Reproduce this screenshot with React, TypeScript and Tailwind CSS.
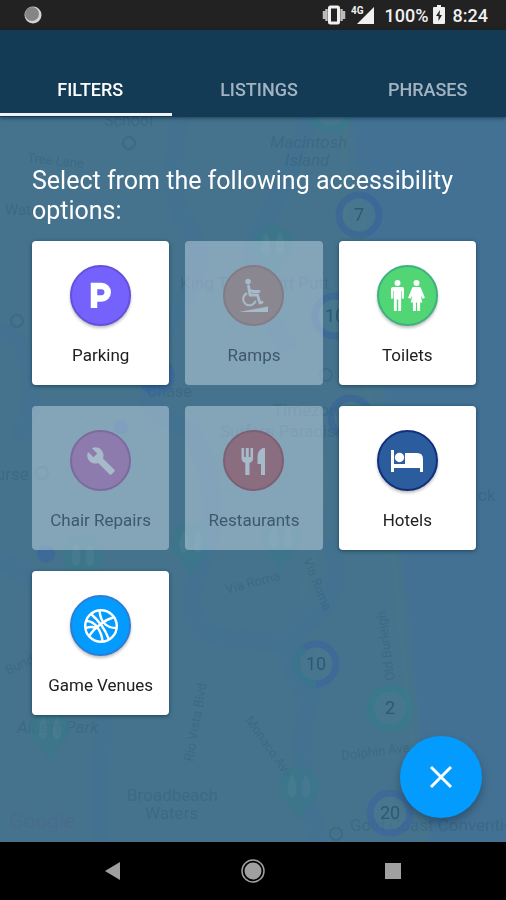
import React from "react";
import { MdBuild } from "react-icons/md";

function ParkingIcon() {
  return (
    <svg viewBox="0 0 22 28" className="h-7 w-[22px]" aria-hidden="true">
      <path d="M4 26V4h7.500a6.200 6.200 0 0 1 0 12.400H5" fill="none" stroke="currentColor" strokeWidth="6.500" />
    </svg>
  );
}

function RampIcon() {
  return (
    <svg viewBox="0 0 32 36" className="h-9 w-8" fill="none" stroke="currentColor" strokeWidth="2" strokeLinecap="round" strokeLinejoin="round" aria-hidden="true">
      <circle cx="10" cy="3.500" r="2.800" fill="currentColor" stroke="none" />
      <path d="M10.500 8 12 17h7.500l2.500 8 2-.7M11.500 12 15 13.500h6" strokeWidth="2.800" />
      <path d="M8.500 15.500a6.300 6.300 0 1 0 8.800 8" />
      <path d="M1 34 30 28.500V34z" fill="currentColor" stroke="none" />
    </svg>
  );
}

function ToiletsIcon() {
  return (
    <svg viewBox="0 0 36 34" className="h-[34px] w-9" fill="currentColor" aria-hidden="true">
      <circle cx="8.500" cy="4" r="3" />
      <path d="M4 8h9q2 0 2 2v9.500h-2.300V12h-.6v20H9.200V20.500H7.800V32H4.900V12h-.6v7.500H2V10q0-2 2-2z" />
      <circle cx="27.500" cy="4" r="3" />
      <path d="M24.500 8h6q1 0 1.400 1l4 9.800-2.200 1-2-3 1.600 6.600h-2.200v8.600h-3v-8.600h-1.200v8.600h-3v-8.600h-2.200l1.600-6.600-2 3-2.200-1 4-9.800q.4-1 1.400-1z" />
    </svg>
  );
}

function RestaurantIcon() {
  return (
    <svg viewBox="0 0 32 32" className="size-8" fill="currentColor" aria-hidden="true">
      <path d="M3.500 3h2.600v9h1.700V3h3v9h1.700V3h2.600v10q0 4-3.600 5v12H7.300V18q-3.800-1-3.800-5z" />
      <path d="M27 4v26h-4V19h-3.500V12q0-6 4.500-8.500Q27 2 27 4z" />
    </svg>
  );
}

function BedIcon() {
  return (
    <svg viewBox="0 0 32 24" className="h-6 w-8" fill="currentColor" aria-hidden="true">
      <path d="M0 1h3v14h26v-1h3v9h-3v-4H3v4H0z" />
      <circle cx="8.500" cy="8.500" r="4.700" />
      <path d="M14 4h12q6 0 6 6v7H14z" />
    </svg>
  );
}

function BasketballIcon() {
  return (
    <svg viewBox="0 0 36 36" className="size-9" fill="none" stroke="currentColor" strokeWidth="2.400" aria-hidden="true">
      <circle cx="18" cy="18" r="15.800" />
      <path d="M8 6Q20 16 26 31.500M6 28Q16 14 31 9M16.500 2.500Q18 20 33.500 20M3 13Q10 13 14.500 19.500T19.500 33.500M2.500 20Q9 18 14 20" />
    </svg>
  );
}

type Option = {
  label: string;
  icon: React.ReactNode;
  circle: string;
  selected: boolean;
};

const options: Option[] = [
  { label: "Parking", icon: <ParkingIcon />, circle: "bg-[#7562fd] border-[#6350dc]", selected: true },
  { label: "Ramps", icon: <RampIcon />, circle: "bg-[#8b8790] border-[#837b86]", selected: false },
  { label: "Toilets", icon: <ToiletsIcon />, circle: "bg-[#52d575] border-[#3db181]", selected: true },
  { label: "Chair Repairs", icon: <MdBuild className="size-[30px]" />, circle: "bg-[#8d7bae] border-[#7c6a9f]", selected: false },
  { label: "Restaurants", icon: <RestaurantIcon />, circle: "bg-[#8b6d80] border-[#7d5f76]", selected: false },
  { label: "Hotels", icon: <BedIcon />, circle: "bg-[#2b5c9e] border-[#122f7c]", selected: true },
  { label: "Game Venues", icon: <BasketballIcon />, circle: "bg-[#039bfe] border-[#2a7ed8]", selected: true },
];

function OptionCard({ option }: { option: Option }) {
  const card = option.selected
    ? "bg-white text-[#202020] shadow-[0_1px_4px_rgba(0,40,60,0.6)]"
    : "bg-[#d0e0ee]/45 text-[#3f586b]";
  const circle = option.selected ? "text-white shadow-[0_2px_3px_rgba(0,0,0,0.25)]" : "text-[#a6bac9]";
  return (
    <button type="button" aria-pressed={option.selected} className={`flex h-36 flex-col items-center rounded pt-6 ${card}`}>
      <span className={`flex size-[61px] items-center justify-center rounded-full border-2 ${option.circle} ${circle}`}>{option.icon}</span>
      <span className="mt-[17px] text-[17px] leading-6">{option.label}</span>
    </button>
  );
}

function Cluster({ x, y, count, color, arc }: { x: number; y: number; count?: string; color: string; arc?: string }) {
  return (
    <g>
      <circle cx={x} cy={y} r="20" fill="#4a7891" stroke={color} strokeWidth="7" />
      {arc && <circle cx={x} cy={y} r="20" fill="none" stroke={arc} strokeWidth="7" strokeDasharray="50 76" transform={`rotate(90 ${x} ${y})`} />}
      {count && <text x={x} y={y + 6} textAnchor="middle" fontSize="18" fill="#22485f">{count}</text>}
    </g>
  );
}

function Pin({ x, y }: { x: number; y: number }) {
  return (
    <g transform={`translate(${x} ${y})`}>
      <path d="M0 36C-4 22-20 15-20 0a20 20 0 0 1 40 0C20 15 4 22 0 36z" fill="#39788a" />
      <path d="M-7-12q6 8 4 20l-4 4-4-4q-2-12 4-20zM7-12q6 8 4 20l-4 4-4-4q-2-12 4-20z" fill="#467f91" />
    </g>
  );
}

function MapBackground() {
  return (
    <svg className="absolute inset-0 h-full w-full" viewBox="0 117 506 725" preserveAspectRatio="xMidYMin slice" aria-hidden="true">
      <rect y="117" width="506" height="725" fill="#45738d" />
      <path d="M350 117C375 240 385 420 400 540S418 700 430 842H506V117z" fill="#437194" />
      <g fill="none" stroke="#41709a" strokeWidth="18" opacity="0.3">
        <path d="M180 117Q165 200 190 230T165 330T190 430Q230 500 200 570T250 640T310 700T320 842" />
        <path d="M310 117Q285 190 260 230T290 350M0 560Q70 600 90 650T100 760V842M0 330Q50 350 20 440M330 540Q350 590 310 620T310 700" />
      </g>
      <g fill="none" stroke="#4a7b88" strokeWidth="6" opacity="0.25">
        <path d="M345 117Q340 250 365 380T400 620T425 842M320 440Q330 520 300 600" />
      </g>
      <g fill="#34607b" fontSize="17" opacity="0.5">
        <text x="104" y="126" fontSize="16">School</text>
        <text x="270" y="148" fontStyle="italic">Macintosh</text>
        <text x="285" y="166" fontStyle="italic">Island</text>
        <text x="27" y="162" fontSize="13" transform="rotate(6 27 162)">Tree Lane</text>
        <text x="5" y="215" fontSize="15">Water</text>
        <text x="180" y="289">King Tutt's Putt Putt</text>
        <text x="147" y="397" fontSize="16">Chase</text>
        <text x="273" y="416">Timezone</text>
        <text x="220" y="437">Surfers Paradise</text>
        <text x="-25" y="480">Course</text>
        <text x="478" y="501">ck</text>
        <text x="17" y="733" fontStyle="italic">Albert Park</text>
        <text x="127" y="801">Broadbeach</text>
        <text x="145" y="819">Waters</text>
        <text x="350" y="831">Gold Coast Convention</text>
        <text x="342" y="760" fontSize="13" transform="rotate(-7 342 760)">Dolphin Ave</text>
        <text x="395" y="680" fontSize="13" transform="rotate(-98 395 680)">Old Burleigh</text>
        <text x="193" y="762" fontSize="13" transform="rotate(-80 193 762)">Rio Vista Blvd</text>
        <text x="245" y="720" fontSize="13" transform="rotate(55 245 720)">Monaco Ave</text>
        <text x="303" y="560" fontSize="13" transform="rotate(68 303 560)">Via Roma</text>
        <text x="227" y="594" fontSize="13" transform="rotate(-15 227 594)">Via Roma</text>
        <text x="8" y="675" fontSize="13" transform="rotate(-25 8 675)">Bundall</text>
      </g>
      <g fill="none" stroke="#35627c" strokeWidth="2" opacity="0.5">
        <circle cx="129" cy="143" r="6" />
        <circle cx="17" cy="321" r="6" />
        <circle cx="42" cy="473" r="6" />
        <circle cx="326" cy="375" r="6" />
        <circle cx="336" cy="834" r="6" />
      </g>
      <text x="9" y="828" fontSize="21" fill="#4c6a8e" opacity="0.8">Google</text>
      <g opacity="0.6">
        <circle cx="156" cy="376" r="19" fill="#3966a0" />
        <circle cx="46" cy="554" r="9" fill="#3966a0" />
        <circle cx="121" cy="427" r="7" fill="#3966a0" />
        <Pin x={273} y={244} />
        <Pin x={83} y={555} />
        <Pin x={191} y={542} />
        <Pin x={281} y={537} />
        <Pin x={50} y={728} />
        <Pin x={299} y={786} />
        <Cluster x={331} y={109} color="#367c8b" />
        <Cluster x={359} y={215} count="7" color="#38659a" />
        <Cluster x={335} y={316} count="10" color="#38659a" />
        <Cluster x={351} y={418} color="#38659a" />
        <Cluster x={316} y={664} count="10" color="#3c65a0" arc="#37788d" />
        <Cluster x={390} y={708} count="2" color="#357c8c" />
        <Cluster x={390} y={813} count="20" color="#3c65a0" />
      </g>
    </svg>
  );
}

function StatusBar() {
  return (
    <div className="flex h-[30px] items-center bg-[#222222] pr-[18px] pl-6 text-[18px] font-medium text-[#f0f0f0]">
      <svg viewBox="0 0 18 18" className="size-[18px]" aria-hidden="true">
        <circle cx="9" cy="9" r="8.500" fill="#d5d5d5" />
        <circle cx="8" cy="8" r="7" fill="#858585" />
      </svg>
      <svg viewBox="0 0 24 20" className="ml-auto h-5 w-6" fill="none" aria-hidden="true">
        <path d="M2 6v8M4.500 4v12M19.500 4v12M22 6v8" stroke="#bbb" strokeWidth="2.500" />
        <rect x="7.500" y="2" width="9" height="16" rx="1" stroke="#f0f0f0" strokeWidth="3" />
      </svg>
      <svg viewBox="0 0 24 20" className="ml-[5px] h-5 w-6" fill="currentColor" aria-hidden="true">
        <path d="M23 2v17H6z" />
        <text x="0" y="9" fontSize="10" fontWeight="700">4G</text>
      </svg>
      <span className="ml-[10px]">100%</span>
      <svg viewBox="0 0 12 20" className="ml-1 h-5 w-3" aria-hidden="true">
        <path d="M4 0h4v2h3q1 0 1 1v15q0 1-1 1H1q-1 0-1-1V3q0-1 1-1h3z" fill="#f0f0f0" />
        <path d="M7 5 3 11h2.500v5L9 10H6.500z" fill="#222" />
      </svg>
      <span className="ml-2">8:24</span>
    </div>
  );
}

export default function App() {
  return (
    <div className="flex min-h-screen flex-col bg-[#45738d] font-[Roboto,'Liberation_Sans',sans-serif]">
      <StatusBar />
      <header className="relative z-10 bg-[#143b55] pt-8 shadow-[0_1px_4px_rgba(0,30,50,0.6)]">
        <div role="tablist" className="grid h-[51px] grid-cols-3 text-[18px] font-medium text-[#a3b3c1]">
          <button type="button" role="tab" aria-selected="true" className="pt-1 pl-3 text-white">FILTERS</button>
          <button type="button" role="tab" aria-selected="false" className="pt-1 pl-3">LISTINGS</button>
          <button type="button" role="tab" aria-selected="false" className="pt-1 pl-3">PHRASES</button>
        </div>
        <div className="h-1 w-[34%] border-b border-[#143b55] bg-[#f0f3fa]" />
      </header>
      <main className="relative flex-1">
        <MapBackground />
        <div className="relative pt-[49px] pr-[30px] pb-[126px] pl-8">
          <h1 className="text-[25px] leading-[30px] text-white">Select from the following accessibility options:</h1>
          <div className="mt-[15px] grid grid-cols-3 gap-x-4 gap-y-[21px]">
            {options.map((option) => (
              <OptionCard key={option.label} option={option} />
            ))}
          </div>
        </div>
        <button type="button" aria-label="Close" className="absolute right-6 bottom-6 flex size-[82px] items-center justify-center rounded-full bg-[#039bfe] text-white shadow-[0_5px_8px_rgba(0,30,50,0.35)]">
          <svg viewBox="0 0 24 24" className="size-6" stroke="currentColor" strokeWidth="3" aria-hidden="true">
            <path d="m2 2 20 20M22 2 2 22" />
          </svg>
        </button>
      </main>
      <nav className="grid h-[58px] grid-cols-[1fr_54px_1fr] items-center bg-black text-[#a0a0a0]">
        <button type="button" aria-label="Back" className="flex justify-center">
          <svg viewBox="0 0 18 20" className="h-5 w-[18px]" fill="currentColor" aria-hidden="true"><path d="M1 10 16 1v18z" /></svg>
        </button>
        <button type="button" aria-label="Home" className="flex justify-center">
          <svg viewBox="0 0 24 24" className="size-6" aria-hidden="true">
            <circle cx="12" cy="12" r="11" fill="none" stroke="currentColor" strokeWidth="1.500" />
            <circle cx="12" cy="12" r="8.500" fill="currentColor" />
          </svg>
        </button>
        <button type="button" aria-label="Recent apps" className="flex justify-center">
          <svg viewBox="0 0 16 16" className="size-4" fill="currentColor" aria-hidden="true"><rect width="16" height="16" /></svg>
        </button>
      </nav>
    </div>
  );
}
